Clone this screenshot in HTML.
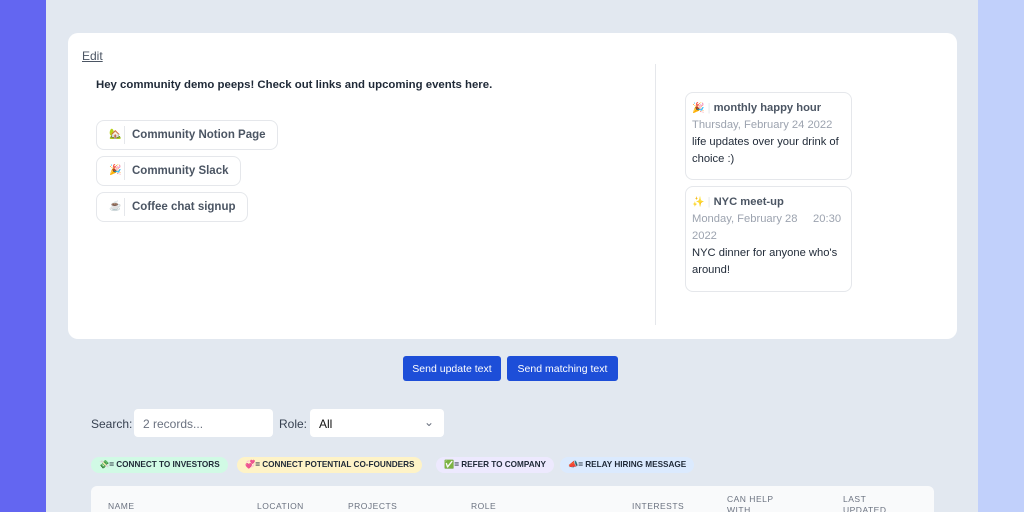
<!DOCTYPE html>
<html><head><meta charset="utf-8"><style>
*{box-sizing:border-box;margin:0;padding:0}
html,body{width:1024px;height:512px;overflow:hidden}
body{font-family:"Liberation Sans","Noto Sans CJK JP",sans-serif;background:#e2e8f0;position:relative;color:#1f2937}
.l{position:absolute;left:0;top:0;width:46px;height:512px;background:#6366f1}
.r{position:absolute;right:0;top:0;width:46px;height:512px;background:#c1d0fb}
.card{position:absolute;left:68px;top:33px;width:889px;height:306px;background:#fff;border-radius:10px}
.edit{position:absolute;left:14px;top:16px;font-size:12px;color:#4b5563;text-decoration:underline}
.hey{position:absolute;left:28px;top:45px;font-size:11.4px;font-weight:bold;color:#1f2937;white-space:nowrap}
.lk{position:absolute;left:28px;height:30px;border:1px solid #e5e7eb;border-radius:8px;font-size:11.5px;font-weight:bold;color:#4b5563;display:flex;align-items:center;padding:0 11px 0 12px;white-space:nowrap}
.lk i{font-style:normal;font-size:10px;width:16px;border-right:1px solid #e5e7eb;margin-right:7px;height:18px;line-height:18px}
.div{position:absolute;left:587px;top:31px;width:1px;height:261px;background:#e5e7eb}
.ev{position:absolute;left:617px;width:167px;border:1px solid #e5e7eb;border-radius:8px;padding:7px 6px 6px;font-size:11.2px;line-height:17px}
.ev b{color:#4b5563}.ev .d{color:#9ca3af;white-space:nowrap}.ev .t{color:#1f2937}
.btn{position:absolute;top:356px;height:25px;background:#1d4ed8;color:#fff;font-size:10.5px;border-radius:3px;display:flex;align-items:center;justify-content:center}
.lab{position:absolute;font-size:12px;color:#374151;top:417px}
.in{position:absolute;top:409px;height:28px;background:#fff;border-radius:4px;font-size:12px;padding:8px 9px}
.tag{position:absolute;top:457px;height:16px;border-radius:8px;font-size:8.2px;font-weight:bold;color:#1f2937;display:flex;align-items:center;padding:0 8px;white-space:nowrap}
.tb{position:absolute;left:91px;top:486px;width:843px;height:40px;background:#f9fafb;border-radius:6px}
.th{position:absolute;font-size:8.5px;color:#6b7280;letter-spacing:.5px;line-height:11px}
</style></head><body>
<div class="l"></div><div class="r"></div>
<div class="card">
<div class="edit">Edit</div>
<div class="hey" style="top:46px">Hey community demo peeps! Check out links and upcoming events here.</div>
<div class="lk" style="top:87px"><i>🏡</i>Community Notion Page</div>
<div class="lk" style="top:123px"><i>🎉</i>Community Slack</div>
<div class="lk" style="top:159px"><i>☕</i>Coffee chat signup</div>
<div class="div"></div>
<div class="ev" style="top:59px;height:88px"><span style="font-size:10px">🎉</span> <span style="color:#e5e7eb">|</span> <b>monthly happy hour</b><div class="d">Thursday, February 24 2022</div><div class="t">life updates over your drink of choice :)</div></div>
<div class="ev" style="top:153px;height:106px"><span style="font-size:10px">✨</span> <span style="color:#e5e7eb">|</span> <b>NYC meet-up</b><div class="d">Monday, February 28 &nbsp;&nbsp;&nbsp;&nbsp;20:30<br>2022</div><div class="t">NYC dinner for anyone who's around!</div></div>
</div>
<div class="btn" style="left:403px;width:98px">Send update text</div>
<div class="btn" style="left:507px;width:111px">Send matching text</div>
<div class="lab" style="left:91px">Search:</div>
<div class="in" style="left:134px;width:139px;color:#6b7280">2 records...</div>
<div class="lab" style="left:279px">Role:</div>
<div class="in" style="left:310px;width:134px;color:#111">All<span style="position:absolute;right:10px;top:6px;color:#6b7280">⌄</span></div>
<div class="tag" style="left:91px;background:#d1fae5">💸= CONNECT TO INVESTORS</div>
<div class="tag" style="left:237px;background:#fef3c7">💞= CONNECT POTENTIAL CO-FOUNDERS</div>
<div class="tag" style="left:436px;background:#ede9fe">✅= REFER TO COMPANY</div>
<div class="tag" style="left:560px;background:#dbeafe">📣= RELAY HIRING MESSAGE</div>
<div class="tb">
<div class="th" style="left:17px;top:15px">NAME</div>
<div class="th" style="left:166px;top:15px">LOCATION</div>
<div class="th" style="left:257px;top:15px">PROJECTS</div>
<div class="th" style="left:380px;top:15px">ROLE</div>
<div class="th" style="left:541px;top:15px">INTERESTS</div>
<div class="th" style="left:636px;top:8px">CAN HELP<br>WITH</div>
<div class="th" style="left:752px;top:8px">LAST<br>UPDATED</div>
</div>
</body></html>
